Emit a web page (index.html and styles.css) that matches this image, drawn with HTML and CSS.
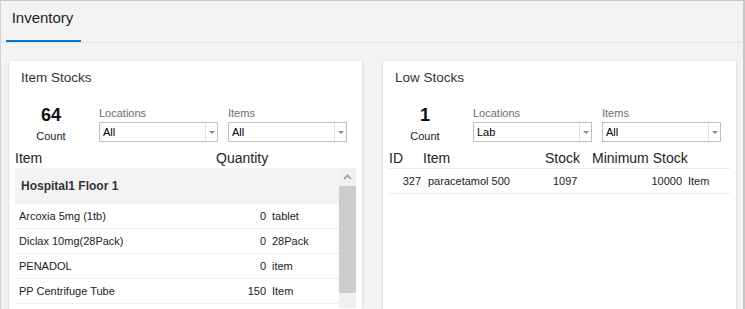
FILE: index.html
```html
<!DOCTYPE html>
<html lang="en">
<head>
    <meta charset="UTF-8">
    <title>Inventory</title>
    <link rel="stylesheet" href="styles.css">
</head>
<body>
    <header class="tabs">
        <div class="tab active">Inventory</div>
    </header>

    <main class="panels">
        <section class="card">
            <h2 class="card-title">Item Stocks</h2>
            <div class="filters">
                <div class="count">
                    <div class="count-num">64</div>
                    <div class="count-label">Count</div>
                </div>
                <div class="field">
                    <label>Locations</label>
                    <div class="select"><span class="value">All</span><span class="arrow"></span></div>
                </div>
                <div class="field">
                    <label>Items</label>
                    <div class="select"><span class="value">All</span><span class="arrow"></span></div>
                </div>
            </div>

            <div class="thead stock-cols">
                <span>Item</span>
                <span>Quantity</span>
            </div>
            <div class="scroll-area">
                <div class="rows">
                    <div class="group">Hospital1 Floor 1</div>
                    <div class="row stock-cols"><span class="name">Arcoxia 5mg (1tb)</span><span class="num">0</span><span class="unit">tablet</span></div>
                    <div class="row stock-cols"><span class="name">Diclax 10mg(28Pack)</span><span class="num">0</span><span class="unit">28Pack</span></div>
                    <div class="row stock-cols"><span class="name">PENADOL</span><span class="num">0</span><span class="unit">item</span></div>
                    <div class="row stock-cols"><span class="name">PP Centrifuge Tube</span><span class="num">150</span><span class="unit">Item</span></div>
                </div>
                <div class="scrollbar">
                    <div class="sb-btn">
                        <svg width="9" height="6" viewBox="0 0 9 6"><path d="M1 5 L4.5 1.5 L8 5" fill="none" stroke="#9a9a9a" stroke-width="1.6"/></svg>
                    </div>
                    <div class="sb-thumb"></div>
                    <div class="sb-track"></div>
                </div>
            </div>
        </section>

        <section class="card">
            <h2 class="card-title">Low Stocks</h2>
            <div class="filters">
                <div class="count">
                    <div class="count-num">1</div>
                    <div class="count-label">Count</div>
                </div>
                <div class="field">
                    <label>Locations</label>
                    <div class="select"><span class="value">Lab</span><span class="arrow"></span></div>
                </div>
                <div class="field">
                    <label>Items</label>
                    <div class="select"><span class="value">All</span><span class="arrow"></span></div>
                </div>
            </div>

            <div class="thead low-cols">
                <span>ID</span>
                <span>Item</span>
                <span>Stock</span>
                <span>Minimum Stock</span>
            </div>
            <div class="low-row low-cols">
                <span class="id">327</span>
                <span class="name">paracetamol 500</span>
                <span class="stock">1097</span>
                <span class="min">10000</span>
                <span class="unit">Item</span>
            </div>
        </section>
    </main>
</body>
</html>
```

FILE: styles.css
```css
* {
    box-sizing: border-box;
}
html, body {
    margin: 0;
    padding: 0;
}
body {
    width: 745px;
    height: 309px;
    overflow: hidden;
    font-family: "Liberation Sans", Arial, sans-serif;
    background-color: #f3f3f3;
    color: #222;
    border-top: 1px solid #c6c6c6;
    border-left: 1px solid #d2d2d2;
    border-right: 2px solid #c8c8c8;
}
.tabs {
    display: flex;
    padding-left: 5px;
    border-bottom: 1px solid #e2e2e2;
}
.tab {
    width: 75px;
    height: 41px;
    padding: 8px 2px 0 0;
    font-size: 15px;
    line-height: 18px;
    text-align: center;
    color: #1e1e1e;
}
.tab.active {
    border-bottom: 2px solid #0078d7;
}
.panels {
    display: grid;
    grid-template-columns: 353px 353px;
    gap: 21px;
    padding: 18px 0 0 8px;
}
.card {
    background: white;
    height: 248px;
    box-shadow: 0 1px 3px rgba(0, 0, 0, 0.18);
    padding: 0 6px;
}
.card-title {
    margin: 0;
    padding: 8px 6px 0;
    font-size: 13.5px;
    font-weight: normal;
    line-height: 18px;
    color: #333;
}
.filters {
    display: flex;
    align-items: flex-start;
    margin-top: 18px;
}
.count {
    width: 72px;
    text-align: center;
}
.count-num {
    font-size: 18px;
    font-weight: bold;
    line-height: 20px;
    color: #111;
}
.count-label {
    font-size: 11px;
    line-height: 14px;
    margin-top: 4px;
}
.field {
    margin-left: 12px;
}
.field + .field {
    margin-left: 10px;
}
.field label {
    display: block;
    font-size: 11px;
    line-height: 14px;
    margin-top: 1px;
    color: #6e6e6e;
}
.select {
    display: flex;
    width: 119px;
    height: 20px;
    margin-top: 2px;
    border: 1px solid #bdbdbd;
    background: white;
}
.select .value {
    flex: 1;
    padding-left: 3px;
    font-size: 11px;
    line-height: 18px;
    color: #000;
}
.select .arrow {
    width: 12px;
    border-left: 1px solid #e2e2e2;
    display: flex;
    align-items: center;
    justify-content: center;
}
.select .arrow::after {
    content: "";
    border-left: 3px solid transparent;
    border-right: 3px solid transparent;
    border-top: 3px solid #8a8a8a;
}
.thead {
    margin-top: 5px;
    height: 20px;
    font-size: 14px;
    line-height: 20px;
    color: #222;
    white-space: nowrap;
}
.stock-cols {
    display: grid;
    grid-template-columns: 201px 50px 1fr;
}
.scroll-area {
    display: flex;
    height: 140px;
}
.rows {
    flex: 1;
    overflow: hidden;
}
.group {
    height: 36px;
    line-height: 36px;
    padding-left: 6px;
    background: #f3f3f3;
    font-size: 12px;
    font-weight: bold;
    color: #333;
}
.row {
    height: 25px;
    line-height: 24px;
    border-bottom: 1px solid #eeeeee;
    font-size: 11px;
}
.row .name {
    padding-left: 4px;
}
.num {
    text-align: right;
}
.row .unit {
    padding-left: 6px;
}
.scrollbar {
    width: 17px;
    display: flex;
    flex-direction: column;
}
.sb-btn {
    height: 18px;
    background: #f0f0f0;
    display: flex;
    align-items: center;
    justify-content: center;
}
.sb-thumb {
    height: 107px;
    background: #cdcdcd;
}
.sb-track {
    flex: 1;
    background: #f0f0f0;
}
.low-cols {
    display: grid;
    grid-template-columns: 34px 122px 47px 94px 1fr;
}
.low-row {
    height: 26px;
    line-height: 24px;
    border-top: 1px solid #ebebeb;
    border-bottom: 1px solid #ebebeb;
    font-size: 11px;
    white-space: nowrap;
}
.low-row .id {
    text-align: right;
    padding-right: 2px;
}
.low-row .name {
    padding-left: 5px;
}
.low-row .stock {
    padding-left: 8px;
}
.low-row .min {
    text-align: right;
    padding-right: 4px;
}
.low-row .unit {
    padding-left: 2px;
}
```
